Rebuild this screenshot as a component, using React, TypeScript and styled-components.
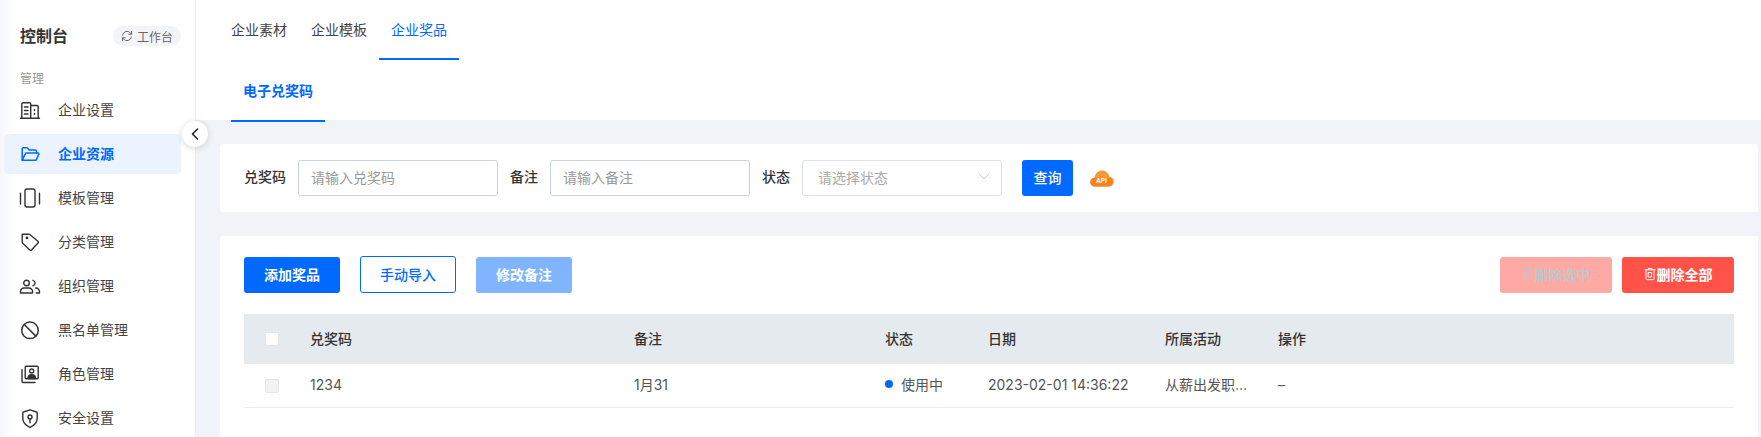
import React from 'react';
import styled, { createGlobalStyle } from 'styled-components';

const FONT = '"Inter", "Noto Sans CJK SC", "Liberation Sans", sans-serif';

const GlobalStyle = createGlobalStyle`
  html, body {
    margin: 0;
    padding: 0;
    height: 437px;
    overflow: hidden;
    background: #f0f3f8;
  }
  body {
    font-family: ${FONT};
    font-size: 14px;
    color: #333;
  }
  * { box-sizing: border-box; }
`;

const iconProps = {
  width: 22,
  height: 22,
  viewBox: '0 0 22 22',
  fill: 'none',
  stroke: '#333',
  strokeWidth: 1.4,
  strokeLinecap: 'round' as const,
  strokeLinejoin: 'round' as const,
};

const BuildingIcon = () => (
  <svg {...iconProps}>
    <path d="M1.500 19.200h19" />
    <path d="M2.800 19V5a1.200 1.200 0 0 1 1.200-1.200h6.500A1.200 1.200 0 0 1 11.700 5v14" />
    <path d="M11.700 6.500h6.300a1.200 1.200 0 0 1 1.200 1.200V19" />
    <path d="M5.500 8h3.500M5.500 11.500h3.500M5.500 15h3.500M15.500 10.500v1M15.500 14.500v1" />
  </svg>
);
const FolderIcon = () => (
  <svg {...iconProps} stroke="currentColor" strokeWidth={1.5}>
    <path d="M3.200 17.200V6a1.300 1.300 0 0 1 1.300-1.300h3.700l2 2.200h6a1.300 1.300 0 0 1 1.300 1.300v1.800" />
    <path d="M3.200 17.200h13.300a1 1 0 0 0 .9-.6l2.400-5.500a.8.800 0 0 0-.7-1.100H7.300a1 1 0 0 0-.9.600l-3.200 6.600z" />
  </svg>
);
const TemplateIcon = () => (
  <svg {...iconProps}>
    <rect x="6" y="2" width="10" height="18" rx="2" />
    <path d="M1.500 6.300v10.700M20.500 6.300v10.700" />
  </svg>
);
const TagIcon = () => (
  <svg {...iconProps}>
    <path d="M3.200 3.200h6.600a2 2 0 0 1 1.300.5l7.800 6.500a1.200 1.200 0 0 1 .1 1.800l-6.500 7a1.200 1.200 0 0 1-1.700.1L3.700 12.200a2 2 0 0 1-.5-1.400V3.200z" />
    <circle cx="8" cy="6.900" r=".7" fill="#333" />
  </svg>
);
const GroupIcon = () => (
  <svg {...iconProps}>
    <circle cx="7.500" cy="8" r="2.800" />
    <path d="M1.500 18v-1.500a3.500 3.500 0 0 1 3.500-3.500h5a3.500 3.500 0 0 1 3.500 3.500V18z" />
    <path d="M14 5.300a2.800 2.800 0 0 1 0 5.400M16.700 13a3.500 3.500 0 0 1 3.800 3.500V18h-3.200" />
  </svg>
);
const BanIcon = () => (
  <svg {...iconProps} strokeWidth={1.5}>
    <circle cx="11" cy="11.300" r="8.300" />
    <path d="M5.200 5.500l11.600 11.600" />
  </svg>
);
const RoleIcon = () => (
  <svg {...iconProps}>
    <rect x="6.200" y="3.200" width="13" height="12.500" rx="1" />
    <circle cx="12.700" cy="8" r="2" />
    <path d="M9 15.500c0-2.500 1.500-3.700 3.700-3.700s3.800 1.200 3.800 3.700z" fill="#333" />
    <path d="M3 6.800V18.500a1 1 0 0 0 1 1h12" />
  </svg>
);
const ShieldIcon = () => (
  <svg {...iconProps}>
    <path d="M11 2.800l6.500 2.200a1 1 0 0 1 .7 1v5.500c0 4-3 7-7.200 8.800-4.200-1.800-7.200-4.800-7.200-8.800V6a1 1 0 0 1 .7-1L11 2.800z" />
    <circle cx="11" cy="10" r="2" />
    <path d="M11 12v3.800" />
  </svg>
);

const RefreshIcon = () => (
  <svg width="12" height="12" viewBox="0 0 12 12" fill="none" stroke="#666" strokeWidth="1" strokeLinecap="round" strokeLinejoin="round">
    <path d="M1.500 5a4.600 4.600 0 0 1 8-2l1 1.200M10.500 1.500v2.700H7.800" />
    <path d="M10.500 7a4.600 4.600 0 0 1-8 2l-1-1.200M1.500 10.500V7.800h2.700" />
  </svg>
);

const TrashIcon = () => (
  <svg width="12" height="14" viewBox="0 0 12 14" fill="none" stroke="currentColor" strokeWidth="1" strokeLinecap="round" strokeLinejoin="round">
    <path d="M1 2.800h10M4 2.800V1.500h4v1.300M2 2.800v8.700a1.200 1.200 0 0 0 1.200 1.200h5.600a1.200 1.200 0 0 0 1.200-1.200V2.800" />
    <path d="M4.500 5.500h3v4.500h-3z" />
  </svg>
);

const ApiCloud = () => (
  <ApiWrap>
    <svg width="24" height="17" viewBox="0 0 24 17">
      <path d="M5 16.500a4.500 4.500 0 0 1-.6-9C5.500 3 8.500.5 12 .5c3.700 0 6.500 2.300 7.400 6.200a4.900 4.900 0 0 1-.9 9.800z" fill="#f59a3c" />
      <path d="M4.500 16.500a4.200 4.200 0 0 1 0-8.400c4-.5 6-1 9-.5 2.500.4 5 .2 5.500.2a4.400 4.400 0 0 1-.5 8.700z" fill="#f58220" />
    </svg>
    <ApiText>API</ApiText>
  </ApiWrap>
);

const navItems = [
  { label: '企业设置', icon: <BuildingIcon /> },
  { label: '企业资源', icon: <FolderIcon />, active: true },
  { label: '模板管理', icon: <TemplateIcon /> },
  { label: '分类管理', icon: <TagIcon /> },
  { label: '组织管理', icon: <GroupIcon /> },
  { label: '黑名单管理', icon: <BanIcon /> },
  { label: '角色管理', icon: <RoleIcon /> },
  { label: '安全设置', icon: <ShieldIcon /> },
];

const columns = [
  { title: '兑奖码', width: 324 },
  { title: '备注', width: 251 },
  { title: '状态', width: 103 },
  { title: '日期', width: 177 },
  { title: '所属活动', width: 113 },
  { title: '操作', width: 0 },
];

export default function App() {
  return (
    <Page>
      <GlobalStyle />
      <Sidebar>
        <SideHead>
          <SideTitle>控制台</SideTitle>
          <WorkButton><RefreshIcon />工作台</WorkButton>
        </SideHead>
        <SectionLabel>管理</SectionLabel>
        <NavList>
          {navItems.map((item) => (
            <NavItem key={item.label} $active={item.active}>
              <NavIcon>{item.icon}</NavIcon>
              <NavLabel>{item.label}</NavLabel>
            </NavItem>
          ))}
        </NavList>
        <Collapse>
          <svg width="10" height="14" viewBox="0 0 10 14" fill="none" stroke="#222" strokeWidth="1.600" strokeLinecap="round" strokeLinejoin="round">
            <path d="M7.500 2L2.500 7l5 5" />
          </svg>
        </Collapse>
      </Sidebar>
      <Main>
        <TabPanel>
          <TopTabs>
            <TopTab>企业素材</TopTab>
            <TopTab>企业模板</TopTab>
            <TopTab $active>企业奖品</TopTab>
          </TopTabs>
          <SubTabs>
            <SubTab>电子兑奖码</SubTab>
          </SubTabs>
        </TabPanel>
        <FilterCard>
          <FieldLabel>兑奖码</FieldLabel>
          <TextBox>请输入兑奖码</TextBox>
          <FieldLabel>备注</FieldLabel>
          <TextBox>请输入备注</TextBox>
          <FieldLabel>状态</FieldLabel>
          <SelectBox>
            请选择状态
            <svg width="12" height="7" viewBox="0 0 12 7" fill="none" stroke="#c9ccd4" strokeWidth="1">
              <path d="M.5.500l5.500 5.500 5.500-5.500" />
            </svg>
          </SelectBox>
          <QueryButton>查询</QueryButton>
          <ApiCloud />
        </FilterCard>
        <TableCard>
          <Toolbar>
            <ActionGroup>
              <Button $variant="primary">添加奖品</Button>
              <Button $variant="outline">手动导入</Button>
              <Button $variant="muted">修改备注</Button>
            </ActionGroup>
            <DangerGroup>
              <Button $variant="dangerOff" $wide><TrashIcon />删除选中</Button>
              <Button $variant="danger" $wide><TrashIcon />删除全部</Button>
            </DangerGroup>
          </Toolbar>
          <HeadRow>
            <CheckCell><CheckBox /></CheckCell>
            {columns.map((c) => (
              <Cell key={c.title} $width={c.width}>{c.title}</Cell>
            ))}
          </HeadRow>
          <BodyRow>
            <CheckCell><CheckBox $disabled /></CheckCell>
            <Cell $width={324}>1234</Cell>
            <Cell $width={251}>1月31</Cell>
            <Cell $width={103}><StatusDot />使用中</Cell>
            <Cell $width={177}>2023-02-01 14:36:22</Cell>
            <Cell $width={113}>从薪出发职…</Cell>
            <Cell $width={0}>–</Cell>
          </BodyRow>
        </TableCard>
      </Main>
    </Page>
  );
}

const Page = styled.div`
  display: flex;
  width: 1761px;
  height: 437px;
  overflow: hidden;
`;

const Sidebar = styled.aside`
  position: relative;
  flex: 0 0 196px;
  background: linear-gradient(90deg, #f6f7f9, #fff 14px);
  border-right: 1px solid #e9edf3;
  padding: 0 14px 0 4px;
  z-index: 1;
`;

const SideHead = styled.div`
  display: flex;
  align-items: center;
  justify-content: space-between;
  padding: 26px 0 0 16px;
  height: 46px;
`;

const SideTitle = styled.div`
  margin-top: -3px;
  font-size: 16px;
  font-weight: 600;
  color: #333;
`;

const WorkButton = styled.div`
  display: flex;
  align-items: center;
  gap: 4px;
  height: 20px;
  padding: 0 8px;
  border-radius: 10px;
  background: #f2f4f8;
  font-size: 12px;
  color: #666;
`;

const SectionLabel = styled.div`
  margin-top: 26px;
  padding-left: 16px;
  font-size: 12px;
  line-height: 14px;
  color: #999;
`;

const NavList = styled.nav`
  display: flex;
  flex-direction: column;
  gap: 4px;
  margin-top: 4px;
`;

const NavItem = styled.div<{ $active?: boolean }>`
  display: flex;
  align-items: center;
  height: 40px;
  padding-left: 15px;
  border-radius: 4px;
  font-size: 14px;
  font-weight: ${(p) => (p.$active ? 600 : 400)};
  color: ${(p) => (p.$active ? '#0069ff' : '#444')};
  background: ${(p) => (p.$active ? '#ebf3fe' : 'transparent')};
`;

const NavIcon = styled.span`
  display: flex;
  width: 22px;
  height: 22px;
  margin-right: 17px;
`;

const NavLabel = styled.span`
  padding-bottom: 2px;
`;

const Collapse = styled.div`
  position: absolute;
  top: 121px;
  right: -13px;
  width: 26px;
  height: 26px;
  display: flex;
  align-items: center;
  justify-content: center;
  border-radius: 50%;
  background: #fff;
  box-shadow: 0 1px 6px rgba(0, 0, 0, 0.16);
`;

const Main = styled.main`
  flex: 1;
  min-width: 0;
  display: flex;
  flex-direction: column;
`;

const TabPanel = styled.div`
  height: 120px;
  padding-left: 35px;
  background: #fff;
`;

const TopTabs = styled.div`
  display: flex;
  height: 60px;
`;

const TopTab = styled.div<{ $active?: boolean }>`
  display: flex;
  align-items: center;
  justify-content: center;
  width: 80px;
  height: 60px;
  font-size: 14px;
  color: ${(p) => (p.$active ? '#0069ff' : '#444')};
  border-bottom: 2px solid ${(p) => (p.$active ? '#0069ff' : 'transparent')};
  &:first-child { width: 68px; justify-content: flex-start; }
`;

const SubTabs = styled.div`
  display: flex;
`;

const SubTab = styled.div`
  display: flex;
  align-items: center;
  justify-content: center;
  width: 94px;
  height: 62px;
  font-size: 14px;
  font-weight: 600;
  color: #0069ff;
  border-bottom: 2px solid #0069ff;
`;

const FilterCard = styled.div`
  display: flex;
  align-items: center;
  height: 68px;
  margin: 24px 3px 0 24px;
  padding-left: 24px;
  background: #fff;
  border-radius: 3px;
`;

const FieldLabel = styled.div`
  margin-right: 12px;
  padding-bottom: 4px;
  font-size: 14px;
  font-weight: 500;
  color: #333;
`;

const TextBox = styled.div`
  display: flex;
  align-items: center;
  width: 200px;
  height: 36px;
  margin-right: 12px;
  padding: 0 0 3px 12px;
  border: 1px solid #ccd3dd;
  border-radius: 3px;
  font-size: 14px;
  color: #999;
`;

const SelectBox = styled(TextBox)`
  justify-content: space-between;
  margin-right: 20px;
  padding: 0 11px 3px 15px;
  border-color: #dddfe6;
  color: #aaa;
`;

const QueryButton = styled.div`
  display: flex;
  align-items: center;
  justify-content: center;
  width: 51px;
  height: 36px;
  padding-bottom: 3px;
  border-radius: 3px;
  background: #0069ff;
  color: #fff;
  font-size: 14px;
  font-weight: 500;
`;

const ApiWrap = styled.div`
  position: relative;
  display: flex;
  width: 24px;
  height: 17px;
  margin-left: 17px;
  margin-top: 1px;
`;

const ApiText = styled.span`
  position: absolute;
  left: 6px;
  top: 7px;
  font-size: 6.500px;
  font-weight: 700;
  line-height: 8px;
  color: #fff;
`;

const TableCard = styled.div`
  flex: 1;
  margin: 24px 3px 0 24px;
  padding: 0 24px;
  background: #fff;
  border-radius: 3px;
`;

const Toolbar = styled.div`
  display: flex;
  justify-content: space-between;
  align-items: center;
  height: 78px;
  padding: 21px 0;
`;

const ActionGroup = styled.div`
  display: flex;
  gap: 20px;
`;

const DangerGroup = styled.div`
  display: flex;
  gap: 10px;
`;

const variants: Record<string, string> = {
  primary: 'background:#0069ff;color:#fff;',
  outline: 'background:#fff;color:#0069ff;border:1px solid #0069ff;height:37px;margin-top:-1px;font-weight:500;',
  muted: 'background:#80b4ff;color:#fff;',
  danger: 'background:#ff5349;color:#fff;',
  dangerOff: 'background:#ffa9a4;color:#c4c4c4;',
};

const Button = styled.div<{ $variant: string; $wide?: boolean }>`
  display: flex;
  align-items: center;
  justify-content: center;
  gap: 1px;
  width: ${(p) => (p.$wide ? 112 : 96)}px;
  height: 36px;
  padding-bottom: 2px;
  border-radius: 3px;
  font-size: 14px;
  font-weight: 600;
  ${(p) => variants[p.$variant]}
`;

const HeadRow = styled.div`
  display: flex;
  align-items: center;
  height: 50px;
  background: #e5eaee;
  font-size: 14px;
  font-weight: 500;
  color: #333;
`;

const BodyRow = styled.div`
  display: flex;
  align-items: center;
  height: 44px;
  border-bottom: 1px solid #e9ecf0;
  font-size: 14px;
  color: #555;
`;

const CheckCell = styled.div`
  display: flex;
  flex: 0 0 66px;
  padding-left: 21px;
`;

const CheckBox = styled.div<{ $disabled?: boolean }>`
  width: 14px;
  height: 14px;
  border-radius: 2px;
  background: ${(p) => (p.$disabled ? '#f3f3f4' : '#fff')};
  border: 1px solid #e3e5e9;
`;

const Cell = styled.div<{ $width: number }>`
  display: flex;
  align-items: center;
  flex: ${(p) => (p.$width ? `0 0 ${p.$width}px` : '1')};
  padding-bottom: 3px;
  white-space: nowrap;
`;

const StatusDot = styled.span`
  width: 8px;
  height: 8px;
  margin-right: 8px;
  border-radius: 50%;
  background: #0069ff;
`;
